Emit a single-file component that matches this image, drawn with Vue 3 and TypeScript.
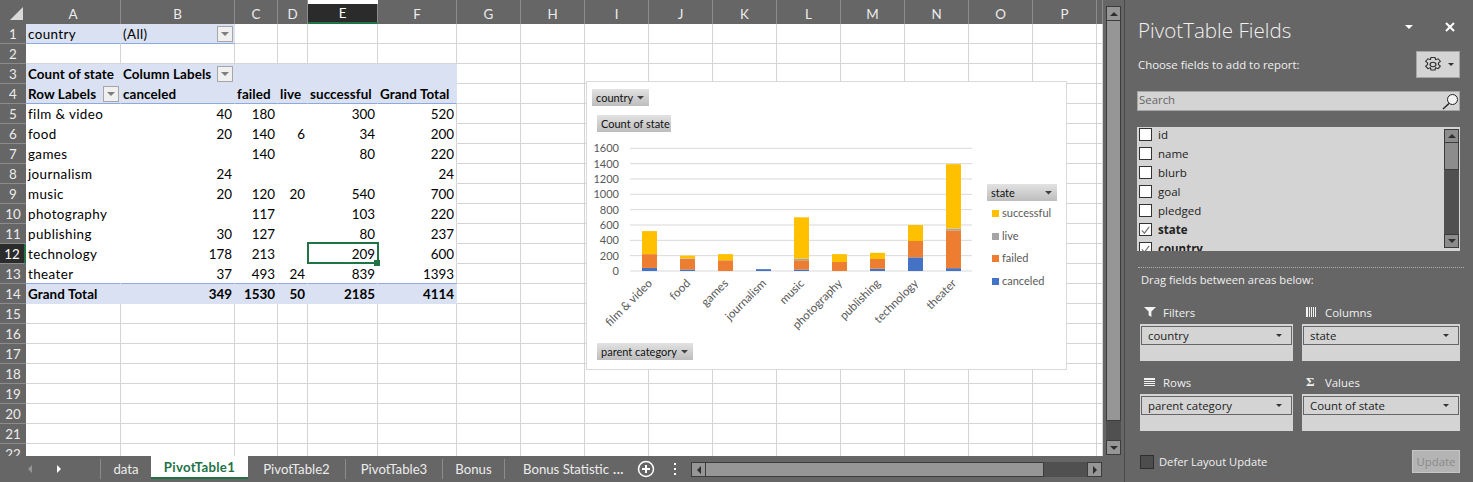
<template>
  <div class="app">
    <div class="workbook">
      <div class="sheet-area">
        <div class="sheet">
          <div class="grid">
            <div class="corner"><span class="corner-tri" /></div>
            <div
              v-for="col in columns"
              :key="col"
              class="col-head"
              :class="{ active: col === 'E' }"
            >
              {{ col }}
            </div>
            <template v-for="(row, r) in rows" :key="r">
              <div class="row-head" :class="{ active: r === 11 }">{{ r + 1 }}</div>
              <div
                v-for="(col, c) in columns"
                :key="col"
                class="cell"
                :class="cellClass(row, c)"
              >
                <span v-if="row.cells[c] !== undefined">{{ row.cells[c] }}</span>
                <span v-if="row.drop === c" class="drop"><i /></span>
                <div v-if="r === 11 && c === 4" class="selection"><b /></div>
              </div>
            </template>
          </div>

          <!-- floating pivot chart, drawn at screen offset (586, 81) -->
          <div class="chart">
            <svg width="481" height="289" viewBox="586 81 481 289">
              <defs>
                <linearGradient id="fieldBtn" x1="0" y1="0" x2="0" y2="1">
                  <stop offset="0" stop-color="#e2e2e2" />
                  <stop offset="1" stop-color="#bdbdbd" />
                </linearGradient>
              </defs>
              <g v-for="t in ticks" :key="t.label">
                <line x1="630" x2="972" :y1="t.y" :y2="t.y" stroke="#d9d9d9" stroke-width="1" />
                <text x="619" :y="t.y + 4" text-anchor="end" class="axis">{{ t.label }}</text>
              </g>
              <g v-for="bar in bars" :key="bar.name">
                <rect
                  v-for="seg in bar.segs"
                  :key="seg.color"
                  :x="bar.x"
                  :y="seg.y"
                  width="15"
                  :height="seg.h"
                  :fill="seg.color"
                />
                <text
                  class="axis cat"
                  text-anchor="end"
                  :transform="`translate(${bar.x + 11} 284) rotate(-45)`"
                >
                  {{ bar.name }}
                </text>
              </g>
              <g v-for="b in fieldButtons" :key="b.label">
                <rect :x="b.x" :y="b.y" :width="b.w" height="17" fill="url(#fieldBtn)" />
                <text :x="b.x + 4" :y="b.y + 13" class="btn-text">{{ b.label }}</text>
                <polygon
                  v-if="b.arrow"
                  :points="`${b.arrow},${b.y + 7} ${b.arrow + 7},${b.y + 7} ${b.arrow + 3.5},${b.y + 10.5}`"
                  fill="#404040"
                />
              </g>
              <g v-for="l in legend" :key="l.label">
                <rect x="992" :y="l.y - 7" width="7" height="7" :fill="l.color" />
                <text x="1002" :y="l.y" class="axis">{{ l.label }}</text>
              </g>
            </svg>
          </div>
        </div>

        <div class="vscroll">
          <div class="sb-btn v"><i class="tri up" /></div>
          <div class="v-thumb" />
          <div class="v-track" />
          <div class="sb-btn v"><i class="tri down" /></div>
        </div>
      </div>

      <div class="tabbar">
        <div class="tab-nav">
          <i class="nav-arrow left" />
          <i class="nav-arrow right" />
        </div>
        <div
          v-for="t in tabs"
          :key="t.name"
          class="tab"
          :class="{ current: t.current, plain: t.plain }"
          :style="{ width: t.width + 'px' }"
        >
          {{ t.name }}
        </div>
        <div class="tab-more">...</div>
        <div class="add-sheet">
          <svg width="18" height="18" viewBox="0 0 18 18">
            <circle cx="9" cy="9" r="7.5" fill="none" stroke="#fff" stroke-width="1.5" />
            <path d="M5 9h8M9 5v8" stroke="#fff" stroke-width="2" />
          </svg>
        </div>
        <div class="tab-dots"><i /><i /><i /></div>
        <div class="hscroll">
          <div class="sb-btn h"><i class="tri left" /></div>
          <div class="h-thumb" />
          <div class="h-track" />
          <div class="sb-btn h"><i class="tri right" /></div>
        </div>
      </div>
    </div>

    <aside class="pane">
      <div class="pane-head">
        <span class="pane-title">PivotTable Fields</span>
        <i class="pane-caret" />
        <svg class="pane-close" width="10" height="10" viewBox="0 0 10 10">
          <path d="M1 1l8 8M9 1l-8 8" stroke="#fff" stroke-width="2" />
        </svg>
      </div>
      <div class="choose-row">
        <span>Choose fields to add to report:</span>
        <div class="gear-btn">
          <svg width="16" height="15" viewBox="2.4 1 13.2 15.6" preserveAspectRatio="none" fill="none" stroke="#303030" stroke-width="1">
            <path d="M7.4 1.5h3.2l.6 2.3 2-.9 1.9 2.6-1.6 1.7v1.6l1.6 1.7-1.9 2.6-2-.9-.6 2.3H7.4l-.6-2.3-2 .9-1.9-2.6 1.6-1.7V7.2L2.9 5.5l1.9-2.6 2 .9z" />
            <circle cx="9" cy="8.8" r="2.4" />
          </svg>
          <i class="gear-caret" />
        </div>
      </div>
      <div class="search">
        <span class="search-text">Search</span>
        <svg width="17" height="17" viewBox="0 0 17 17" fill="none" stroke="#222" stroke-width="1">
          <circle cx="10.5" cy="6.5" r="5" fill="#f2f2f2" />
          <path d="M7 10.5L1 16" stroke-width="1.4" />
        </svg>
      </div>
      <div class="field-list">
        <div class="fields">
          <div v-for="f in fields" :key="f.name" class="field" :class="{ on: f.on }">
            <span class="check">
              <svg v-if="f.on" width="12" height="12" viewBox="0 0 12 12">
                <path d="M2 6.5l2.8 3L10 2.5" fill="none" stroke="#777" stroke-width="1.3" />
              </svg>
            </span>
            <span>{{ f.name }}</span>
          </div>
        </div>
        <div class="list-scroll">
          <div class="sb-btn l"><i class="tri up" /></div>
          <div class="l-thumb" />
          <div class="l-track" />
          <div class="sb-btn l"><i class="tri down" /></div>
        </div>
      </div>
      <div class="dots" />
      <div class="drag-label">Drag fields between areas below:</div>
      <div class="areas">
        <div v-for="a in areas" :key="a.title" class="area">
          <div class="area-title">
            <span class="area-icon">
              <svg v-if="a.icon === 'filter'" width="12" height="10" viewBox="0 0 12 10">
                <path d="M0 0h12L7.4 4.6V10L4.6 8.2V4.6z" fill="#f2f2f2" />
              </svg>
              <svg v-else-if="a.icon === 'cols'" width="10" height="10" viewBox="0 0 10 10">
                <path d="M0 0h2v10H0zM3 0h1v10H3zM5 0h1v10H5zM7 0h1v10H7zM9 0h1v10H9z" fill="#f2f2f2" />
              </svg>
              <svg v-else-if="a.icon === 'rows'" width="11" height="8" viewBox="0 0 11 8">
                <path d="M0 0h11v2H0zM0 3h11v1H0zM0 5h11v1H0zM0 7h11v1H0z" fill="#f2f2f2" />
              </svg>
              <span v-else class="sigma">Σ</span>
            </span>
            <span>{{ a.title }}</span>
          </div>
          <div class="area-box">
            <div class="area-item">
              <span>{{ a.item }}</span>
              <i class="item-caret" />
            </div>
          </div>
        </div>
      </div>
      <div class="pane-foot">
        <span class="defer-box" />
        <span class="defer-text">Defer Layout Update</span>
        <span class="update-btn">Update</span>
      </div>
    </aside>
  </div>
</template>

<script setup lang="ts">
interface Row {
  cells: (string | number | undefined)[]
  kind?: 'fill' | 'body'
  blue?: boolean
  filledTo?: number
  drop?: number
}

const columns = ['A', 'B', 'C', 'D', 'E', 'F', 'G', 'H', 'I', 'J', 'K', 'L', 'M', 'N', 'O', 'P', '']

const u = undefined
const body = (cells: Row['cells'], blue = false): Row => ({ cells, kind: 'body', blue })

const rows: Row[] = [
  { cells: ['country', '(All)'], kind: 'fill', filledTo: 1, blue: true, drop: 1 },
  { cells: [] },
  { cells: ['Count of state', 'Column Labels'], kind: 'fill', drop: 1 },
  { cells: ['Row Labels', 'canceled', 'failed', 'live', 'successful', 'Grand Total'], kind: 'fill', blue: true, drop: 0 },
  body(['film & video', 40, 180, u, 300, 520]),
  body(['food', 20, 140, 6, 34, 200]),
  body(['games', u, 140, u, 80, 220]),
  body(['journalism', 24, u, u, u, 24]),
  body(['music', 20, 120, 20, 540, 700]),
  body(['photography', u, 117, u, 103, 220]),
  body(['publishing', 30, 127, u, 80, 237]),
  body(['technology', 178, 213, u, 209, 600]),
  body(['theater', 37, 493, 24, 839, 1393], true),
  { cells: ['Grand Total', 349, 1530, 50, 2185, 4114], kind: 'fill' },
  ...Array.from({ length: 8 }, (): Row => ({ cells: [] })),
]

function cellClass(row: Row, c: number) {
  const filled = row.kind === 'fill' && c <= (row.filledTo ?? 5)
  const inBody = row.kind === 'body' && c <= 5
  const isBold = row.kind === 'fill' && row.filledTo === undefined
  return {
    fill: filled,
    bold: isBold,
    body: inBody,
    'body-end': inBody && c === 5,
    'blue-line': row.blue && (filled || inBody),
    num: typeof row.cells[c] === 'number',
    label: !isBold && typeof row.cells[c] === 'string',
    'has-drop': row.drop === c,
  }
}

const ZERO_Y = 271
const PX_PER_UNIT = 122.7 / 1600

const ticks = [0, 200, 400, 600, 800, 1000, 1200, 1400, 1600].map((v) => ({
  label: String(v),
  y: ZERO_Y - v * PX_PER_UNIT,
}))

const stackColors = ['#4472c4', '#ed7d31', '#a5a5a5', '#ffc000']
const chartData: [string, number[]][] = [
  ['film & video', [40, 180, 0, 300]],
  ['food', [20, 140, 6, 34]],
  ['games', [0, 140, 0, 80]],
  ['journalism', [24, 0, 0, 0]],
  ['music', [20, 120, 20, 540]],
  ['photography', [0, 117, 0, 103]],
  ['publishing', [30, 127, 0, 80]],
  ['technology', [178, 213, 0, 209]],
  ['theater', [37, 493, 24, 839]],
]

const bars = chartData.map(([name, values], i) => {
  let total = 0
  const segs = values.map((v, s) => {
    total += v
    return { color: stackColors[s], y: ZERO_Y - total * PX_PER_UNIT, h: v * PX_PER_UNIT }
  })
  return { name, x: 642 + i * 38, segs }
})

const fieldButtons = [
  { label: 'country', x: 592, y: 89, w: 57, arrow: 637 },
  { label: 'Count of state', x: 597, y: 115, w: 74, arrow: 0 },
  { label: 'parent category', x: 597, y: 343, w: 96, arrow: 681 },
  { label: 'state', x: 987, y: 184, w: 70, arrow: 1045 },
]

const legend = [
  { label: 'successful', y: 217, color: '#ffc000' },
  { label: 'live', y: 240, color: '#a5a5a5' },
  { label: 'failed', y: 262, color: '#ed7d31' },
  { label: 'canceled', y: 285, color: '#4472c4' },
]

const tabs = [
  { name: 'data', width: 50, plain: true },
  { name: 'PivotTable1', width: 97, current: true },
  { name: 'PivotTable2', width: 98 },
  { name: 'PivotTable3', width: 97 },
  { name: 'Bonus', width: 62 },
  { name: 'Bonus Statistic', width: 104, plain: true },
]

const fields = [
  { name: 'id' },
  { name: 'name' },
  { name: 'blurb' },
  { name: 'goal' },
  { name: 'pledged' },
  { name: 'state', on: true },
  { name: 'country', on: true },
]

const areas = [
  { title: 'Filters', icon: 'filter', item: 'country' },
  { title: 'Columns', icon: 'cols', item: 'state' },
  { title: 'Rows', icon: 'rows', item: 'parent category' },
  { title: 'Values', icon: 'sigma', item: 'Count of state' },
]
</script>

<style>
html,
body {
  margin: 0;
  background: #666;
}
</style>

<style scoped>
.app {
  display: flex;
  width: 1473px;
  height: 482px;
  overflow: hidden;
  background: #666;
  font-family: Lato, "Liberation Sans", sans-serif;
}

.workbook {
  width: 1124px;
  flex-shrink: 0;
  display: flex;
  flex-direction: column;
  border-right: 1px solid #4a4a4a;
}

.sheet-area {
  display: flex;
  height: 456px;
}

.sheet {
  position: relative;
  width: 1103px;
  height: 456px;
  overflow: hidden;
  background: #fff;
}

.grid {
  display: grid;
  grid-template-columns: 26px 95px 114px 43px 30px 70px 79px repeat(10, 64px) 6px;
  grid-template-rows: 24px repeat(22, 20px);
  font-size: 13.4px;
  color: #000;
}

.corner {
  background: #666;
  padding-top: 4px;
  position: relative;
}

.corner-tri {
  position: absolute;
  right: 3px;
  bottom: 4px;
  border-style: solid;
  border-width: 0 0 13px 13px;
  border-color: transparent transparent #d9d9d9 transparent;
}

.col-head {
  box-sizing: border-box;
  display: flex;
  align-items: center;
  justify-content: center;
  padding-top: 4px;
  background: #666;
  color: #ececec;
  border-right: 1px solid #8c8c8c;
  background-clip: padding-box;
}

.col-head.active {
  margin-top: 4px;
  padding-top: 0;
  background: #2b2b2b;
  color: #fff;
  border-bottom: 2px solid #217346;
}

.row-head {
  box-sizing: border-box;
  display: flex;
  align-items: center;
  justify-content: center;
  background: #666;
  color: #ececec;
  border-bottom: 1px solid #8c8c8c;
}

.row-head.active {
  background: #2b2b2b;
  color: #fff;
  border-right: 2px solid #217346;
}

.cell {
  box-sizing: border-box;
  position: relative;
  display: flex;
  align-items: center;
  padding: 0 2px;
  white-space: nowrap;
  border-right: 1px solid #d4d4d4;
  border-bottom: 1px solid #d4d4d4;
}

.cell.label {
  letter-spacing: 0.4px;
}

.cell.bold {
  font-weight: 700;
  letter-spacing: 0.1px;
}

.cell.num {
  justify-content: flex-end;
  letter-spacing: 0;
}

.cell.fill {
  background: #d9e1f2;
  border-color: #d9e1f2;
}

.cell.body {
  border-color: #fff;
}

.cell.body-end {
  border-right-color: #d4d4d4;
}

.cell.blue-line {
  border-bottom-color: #8ea9db;
}

.drop {
  position: absolute;
  right: 1px;
  top: 2px;
  box-sizing: border-box;
  width: 16px;
  height: 16px;
  display: flex;
  align-items: center;
  justify-content: center;
  background: #f0f0f0;
  border: 1px solid #a6a6a6;
}

.drop i {
  border-style: solid;
  border-width: 4px 4px 0;
  border-color: #7f7f7f transparent transparent;
}

.selection {
  position: absolute;
  z-index: 2;
  inset: -2px -2px -1px -1px;
  border: 2px solid #217346;
}

.selection b {
  position: absolute;
  right: -3px;
  bottom: -4px;
  width: 6px;
  height: 6px;
  background: #217346;
}

.chart {
  position: absolute;
  left: 586px;
  top: 81px;
  width: 481px;
  height: 289px;
  box-sizing: border-box;
  background: #fff;
  outline: 1px solid #d9d9d9;
  outline-offset: -1px;
}

.chart svg {
  display: block;
}

.axis {
  font-family: Lato, sans-serif;
  font-size: 11px;
  fill: #595959;
}

.axis.cat {
  font-size: 11.6px;
}

.btn-text {
  font-family: Lato, sans-serif;
  font-size: 11px;
  fill: #111;
}

.vscroll {
  width: 15px;
  padding: 6px 3px 1px;
  display: flex;
  flex-direction: column;
}

.sb-btn {
  box-sizing: border-box;
  flex-shrink: 0;
  display: flex;
  align-items: center;
  justify-content: center;
  background: #969696;
  border: 1px solid #3c3c3c;
}

.sb-btn.v {
  height: 15px;
}

.sb-btn.h {
  width: 15px;
}

.sb-btn.l {
  height: 14px;
  background: #8c8c8c;
}

.tri {
  border-style: solid;
  border-color: transparent;
}

.tri.up {
  border-width: 0 4px 4px;
  border-bottom-color: #2e2e2e;
}

.tri.down {
  border-width: 4px 4px 0;
  border-top-color: #2e2e2e;
}

.tri.left {
  border-width: 4px 4px 4px 0;
  border-right-color: #2e2e2e;
}

.tri.right {
  border-width: 4px 0 4px 4px;
  border-left-color: #2e2e2e;
}

.v-thumb {
  height: 400px;
  box-sizing: border-box;
  background: #969696;
  border: 1px solid #3c3c3c;
  border-top: 0;
}

.v-track {
  flex: 1;
  background: #505050;
}

.tabbar {
  flex: 1;
  display: flex;
  align-items: stretch;
  font-size: 13.2px;
  color: #ececec;
}

.tabbar > * {
  flex-shrink: 0;
}

.tab-nav {
  box-sizing: border-box;
  width: 101px;
  display: flex;
  align-items: center;
  padding-left: 28px;
  gap: 25px;
  border-right: 1px solid #8c8c8c;
  margin: 3px 0;
}

.nav-arrow {
  border-style: solid;
  border-color: transparent;
  border-width: 4px 0 4px 4px;
}

.nav-arrow.left {
  border-width: 4px 4px 4px 0;
  border-right-color: #969696;
}

.nav-arrow.right {
  border-left-color: #fff;
}

.tab {
  box-sizing: border-box;
  display: flex;
  align-items: center;
  justify-content: center;
  white-space: nowrap;
  margin: 3px 0;
  border-right: 1px solid #8c8c8c;
}

.tab.plain {
  border-right: 0;
}

.tab:nth-child(7) {
  justify-content: flex-start;
  padding-left: 18px;
  overflow: hidden;
}

.tab.current {
  margin: 0 0 3px;
  background: #fff;
  color: #217346;
  font-weight: 700;
  letter-spacing: 0.3px;
  border-right: 0;
  border-bottom: 2px solid #217346;
}

.tab-more {
  width: 28px;
  box-sizing: border-box;
  display: flex;
  align-items: center;
  padding-left: 4px;
  font-weight: 700;
  letter-spacing: 0.5px;
}

.add-sheet {
  width: 18px;
  display: flex;
  align-items: center;
  justify-content: center;
}

.tab-dots {
  width: 36px;
  box-sizing: border-box;
  padding-left: 4px;
  display: flex;
  flex-direction: column;
  align-items: center;
  justify-content: center;
  gap: 3px;
}

.tab-dots i {
  width: 2px;
  height: 2px;
  background: #fff;
}

.hscroll {
  display: flex;
  width: 411px;
  height: 15px;
  margin-top: 6px;
}

.h-thumb {
  width: 338px;
  background: #969696;
  border: 1px solid #3c3c3c;
  border-left: 0;
  box-sizing: border-box;
}

.h-track {
  flex: 1;
  background: #505050;
}

.pane {
  flex: 1;
  box-sizing: border-box;
  padding: 0 13px 0 12px;
  color: #f0f0f0;
  font-family: "Open Sans", "Noto Sans", sans-serif;
  font-size: 11.4px;
}

.pane-head {
  box-sizing: border-box;
  height: 51px;
  padding: 8px 0 0 1px;
  display: flex;
  align-items: center;
}

.pane-title {
  flex: 1;
  font-size: 20.6px;
  font-weight: 300;
  color: #f2f2f2;
}

.pane-caret {
  border-style: solid;
  border-width: 4px 4.5px 0;
  border-color: #fff transparent transparent;
  margin: -6px 32px 0 0;
}

.pane-close {
  margin: -6px 5px 0 0;
}

.choose-row {
  display: flex;
  align-items: center;
  justify-content: space-between;
  height: 27px;
  padding-left: 1px;
}

.gear-btn {
  box-sizing: border-box;
  width: 44px;
  height: 27px;
  display: flex;
  align-items: center;
  gap: 7px;
  padding-left: 8px;
  background: #d4d4d4;
  border: 1px solid #a6a6a6;
}

.gear-caret {
  border-style: solid;
  border-width: 3px 3px 0;
  border-color: #303030 transparent transparent;
}

.search {
  box-sizing: border-box;
  height: 20px;
  margin-top: 13px;
  display: flex;
  align-items: center;
  justify-content: space-between;
  padding-left: 1px;
  background: #d4d4d4;
  border: 1px solid #a6a6a6;
  color: #666;
}

.search-text {
  margin-top: -3px;
}

.field-list {
  height: 124px;
  margin-top: 16px;
  display: flex;
  overflow: hidden;
  background: #d4d4d4;
  color: #222;
}

.fields {
  flex: 1;
  margin-top: -2px;
}

.field {
  height: 19px;
  display: flex;
  align-items: center;
  gap: 6px;
  padding-left: 2px;
  font-size: 11.5px;
}

.field.on {
  font-weight: 700;
}

.check {
  box-sizing: border-box;
  width: 13px;
  height: 13px;
  background: #fff;
  border: 1px solid #333;
  display: flex;
  align-items: center;
  justify-content: center;
}

.list-scroll {
  width: 15px;
  padding: 2px 1px 3px 0;
  display: flex;
  flex-direction: column;
}

.l-thumb {
  height: 27px;
  box-sizing: border-box;
  background: #8c8c8c;
  border: 1px solid #3c3c3c;
  border-top: 0;
}

.l-track {
  flex: 1;
  background: #505050;
}

.dots {
  margin: 16px -4px 0 1px;
  border-top: 1px dotted #b0b0b0;
}

.drag-label {
  height: 26px;
  margin-top: 4px;
  padding-left: 4px;
  line-height: 16px;
  font-size: 11.2px;
}

.areas {
  display: grid;
  grid-template-columns: 153px 158px;
  column-gap: 9px;
  row-gap: 13px;
  padding: 6px 0 0 3px;
}

.area-title {
  height: 16px;
  margin-bottom: 4px;
  display: flex;
  align-items: center;
}

.area-icon {
  width: 23px;
  padding-left: 4px;
  box-sizing: border-box;
  display: flex;
  align-items: center;
}

.sigma {
  font-family: "Liberation Serif", serif;
  font-weight: 700;
  font-size: 13px;
}

.area-box {
  box-sizing: border-box;
  height: 37px;
  padding: 2px 1px;
  background: #d4d4d4;
  color: #222;
}

.area-item {
  box-sizing: border-box;
  height: 19px;
  display: flex;
  align-items: center;
  justify-content: space-between;
  padding: 0 9px 0 6px;
  border: 1px solid #666;
  font-size: 11.4px;
}

.item-caret {
  border-style: solid;
  border-width: 3.5px 3.5px 0;
  border-color: #333 transparent transparent;
}

.pane-foot {
  display: flex;
  align-items: center;
  margin-top: 19px;
  padding-left: 3px;
}

.defer-box {
  box-sizing: border-box;
  width: 14px;
  height: 14px;
  background: #4d4d4d;
  border: 1px solid #2f2f2f;
}

.defer-text {
  flex: 1;
  margin-left: 5px;
  font-size: 11.2px;
}

.update-btn {
  box-sizing: border-box;
  width: 48px;
  height: 23px;
  display: flex;
  align-items: center;
  justify-content: center;
  background: #b4b4b4;
  border: 1px solid #c6c6c6;
  color: #8a8a8a;
}
</style>
